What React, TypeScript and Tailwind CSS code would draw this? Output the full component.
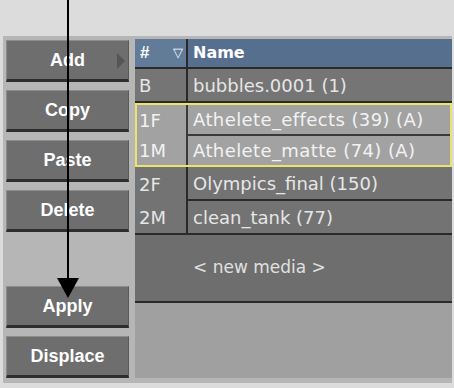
import React from "react";

const btn =
  "h-[42px] w-[123px] shrink-0 flex items-center justify-center bg-[#6e6e6e] border-t border-l border-t-[#8c8c8c] border-l-[#8c8c8c] border-r border-r-[#5a5a5a] border-b-[3px] border-b-[#2e2e2e] text-white font-bold text-[18px] font-['Liberation_Sans',sans-serif] relative";

const rowText = "font-['DejaVu_Sans',sans-serif] text-[18px] text-[#e6e6e6]";

export default function App() {
  return (
    <div className="relative w-[454px] h-[388px] bg-[#dcdcdc] pt-[36px] pl-[3px] pr-[2px] overflow-hidden">
      <div className="flex h-[347px] bg-[#b6b6b6] pb-[5px]">
        <div className="w-[132px] shrink-0 pl-[3px] pt-[4px] flex flex-col gap-[8px]">
          <div className={btn}>
            Add
            <svg className="absolute right-[3px] top-[12px]" width="8" height="16" viewBox="0 0 8 16">
              <polygon points="0,0 8,8 0,16" fill="#555" />
            </svg>
          </div>
          <div className={btn}>Copy</div>
          <div className={btn}>Paste</div>
          <div className={btn}>Delete</div>
          <div className="flex-1" />
          <div className={btn}>Apply</div>
          <div className={btn}>Displace</div>
        </div>
        <div className="flex-1 flex flex-col pt-[3px]">
          {/* header */}
          <div className="flex h-[30px] border-b-2 border-[#2a2a2a]">
            <div className="w-[51px] bg-[#617b98] flex items-center justify-between pl-[5px] pr-[3px] text-white font-bold text-[17px] font-['Liberation_Sans',sans-serif]">
              <span>#</span>
              <span className="text-[13px] font-normal">▽</span>
            </div>
            <div className="w-[2px] bg-[#2a2a2a]" />
            <div className="flex-1 bg-[#566f8f] flex items-center pl-[5px] text-white font-bold text-[16px] font-['DejaVu_Sans',sans-serif]">
              Name
            </div>
          </div>
          {/* row B */}
          <div className="flex h-[34px] bg-[#757575] border-b-2 border-[#2a2a2a]">
            <div className={`w-[51px] flex items-center pl-[4px] ${rowText}`}>B</div>
            <div className="w-[2px] bg-[#2a2a2a]" />
            <div className={`flex-1 flex items-center pl-[5px] ${rowText}`}>bubbles.0001 (1)</div>
          </div>
          {/* group 1 */}
          <div className="flex h-[64px] bg-[#a2a2a2] border-2 border-solid border-[#e8e46c]">
            <div className={`w-[49px] flex flex-col ${rowText} text-[#f2f2f2]`}>
              <div className="h-[31px] flex items-center pl-[2px]">1F</div>
              <div className="h-[29px] flex items-center pl-[2px]">1M</div>
            </div>
            <div className="w-[2px] bg-[#3a3a3a]" />
            <div className={`flex-1 flex flex-col ${rowText} text-[#f2f2f2] tracking-[0.4px]`}>
              <div className="h-[31px] flex items-center pl-[5px] border-b-2 border-[#3a3a3a]">Athelete_effects (39) (A)</div>
              <div className="h-[29px] flex items-center pl-[5px]">Athelete_matte (74) (A)</div>
            </div>
          </div>
          {/* group 2 */}
          <div className="flex h-[68px] bg-[#737373] border-b-2 border-[#2a2a2a]">
            <div className={`w-[51px] flex flex-col ${rowText}`}>
              <div className="h-[34px] flex items-center pl-[4px]">2F</div>
              <div className="h-[32px] flex items-center pl-[4px]">2M</div>
            </div>
            <div className="w-[2px] bg-[#2a2a2a]" />
            <div className={`flex-1 flex flex-col ${rowText}`}>
              <div className="h-[34px] flex items-center pl-[5px] border-b-2 border-[#2a2a2a]">Olympics_final (150)</div>
              <div className="h-[32px] flex items-center pl-[5px]">clean_tank (77)</div>
            </div>
          </div>
          {/* new media */}
          <div className="h-[68px] bg-[#6e6e6e] border-b-2 border-[#2a2a2a] flex items-center pl-[58px] text-[17px] text-[#e0e0e0] font-['DejaVu_Sans',sans-serif]">
            &lt; new media &gt;
          </div>
          <div className="flex-1 bg-[#a0a0a0]" />
        </div>
      </div>
      <svg className="absolute left-0 top-0 pointer-events-none" width="454" height="388" viewBox="0 0 454 388">
        <line x1="68" y1="0" x2="68" y2="282" stroke="#000" strokeWidth="2" />
        <polygon points="57,278 79,278 68,298" fill="#000" />
      </svg>
    </div>
  );
}
